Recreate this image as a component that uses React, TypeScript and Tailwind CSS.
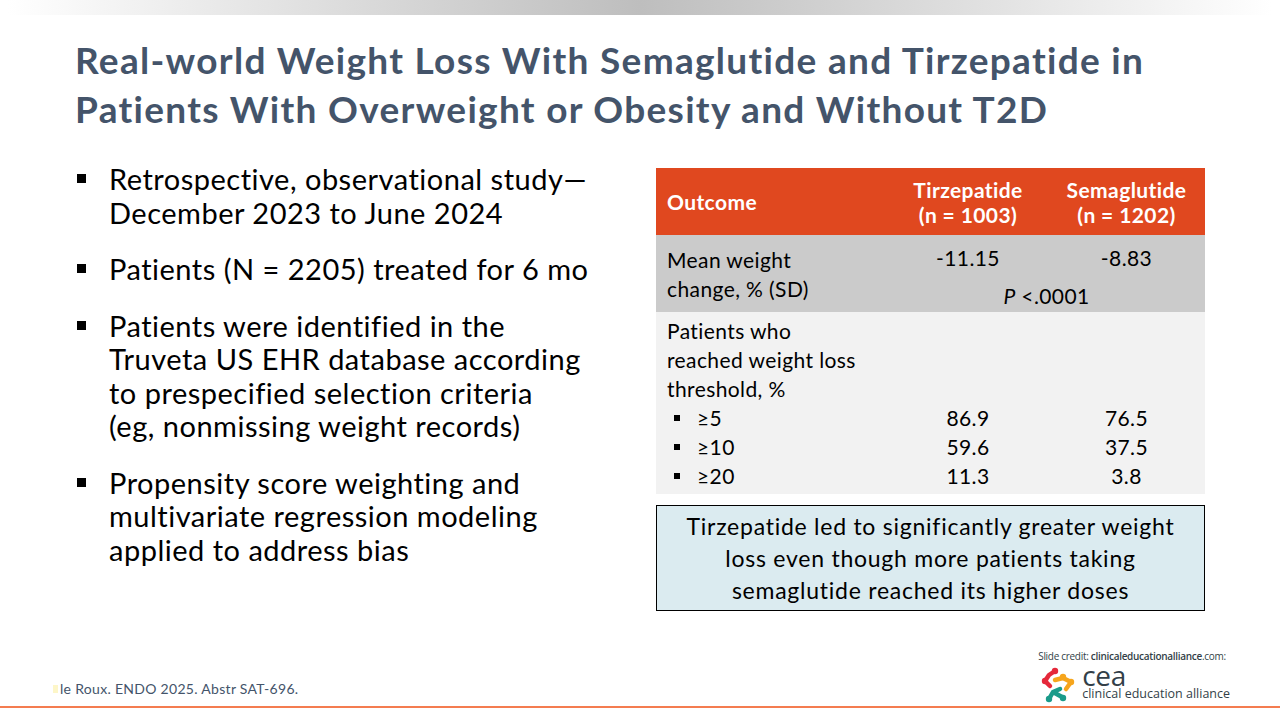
import React from 'react';

const body = "font-['Lato','Liberation_Sans',sans-serif]";

const bullets = [
  ['Retrospective, observational study—', 'December 2023 to June 2024'],
  ['Patients (N = 2205) treated for 6 mo'],
  [
    'Patients were identified in the',
    'Truveta US EHR database according',
    'to prespecified selection criteria',
    '(eg, nonmissing weight records)',
  ],
  ['Propensity score weighting and', 'multivariate regression modeling', 'applied to address bias'],
];

const thresholds = [
  ['≥5', '86.9', '76.5'],
  ['≥10', '59.6', '37.5'],
  ['≥20', '11.3', '3.8'],
];

const CeaMark = () => (
  <svg width="34" height="36" viewBox="0 0 34 36">
    {/* red arm */}
    <path d="M14 4 L8 8 L4 14 L9 19" stroke="#e5283a" strokeWidth="4.5" fill="none" strokeLinecap="round" strokeLinejoin="round" />
    <circle cx="14" cy="4" r="3.2" fill="#e5283a" />
    <circle cx="4" cy="14" r="3.2" fill="#e5283a" />
    {/* orange arm */}
    <path d="M14 13 L22 11 L30 15 L25 22" stroke="#f6a51c" strokeWidth="4.5" fill="none" strokeLinecap="round" strokeLinejoin="round" />
    <circle cx="22" cy="10" r="3.2" fill="#f6a51c" />
    <circle cx="30" cy="15" r="3.2" fill="#f6a51c" />
    {/* teal arm */}
    <path d="M19 22 L12 25 L8 32 M12 25 L21 30" stroke="#1a9b8a" strokeWidth="4.5" fill="none" strokeLinecap="round" strokeLinejoin="round" />
    <circle cx="8" cy="32" r="3.2" fill="#1a9b8a" />
    <circle cx="22" cy="31" r="3.2" fill="#1a9b8a" />
  </svg>
);

export default function App() {
  return (
    <div className={`w-[1280px] h-[720px] bg-white flex flex-col overflow-hidden ${body}`}>
      {/* top gradient strip */}
      <div className="h-[15px] mx-[8px] bg-gradient-to-r from-white via-[#bebebe] to-white" />

      {/* title */}
      <h1 className="px-[75px] pt-[20px] text-[37px] leading-[49px] font-bold text-[#44546a] tracking-[1.3px]">
        Real-world Weight Loss With Semaglutide and Tirzepatide in
        <br />
        Patients With Overweight or Obesity and Without T2D
      </h1>

      <div className="flex pt-[29px] flex-1">
        {/* left bullets */}
        <div className="w-[600px] pl-[77px] flex flex-col gap-[23px]">
          {bullets.map((lines, i) => (
            <div key={i} className="flex text-[29px] leading-[33.5px] tracking-[0.5px] text-black">
              <div className="w-[32px] pt-[12px]">
                <div className="w-[9px] h-[9px] bg-black" />
              </div>
              <div>
                {lines.map((l) => (
                  <div key={l}>{l}</div>
                ))}
              </div>
            </div>
          ))}
        </div>

        {/* right table */}
        <div className="pl-[56px] pt-[6px] flex flex-col">
          <div className="w-[549px] text-[21px] tracking-[0.4px]">
            <div className="grid grid-cols-[232px_160px_157px] bg-[#e0481f] text-white font-bold h-[67px] items-center leading-[25px]">
              <div className="pl-[11px]">Outcome</div>
              <div className="text-center">Tirzepatide<br />(n = 1003)</div>
              <div className="text-center">Semaglutide<br />(n = 1202)</div>
            </div>
            <div className="grid grid-cols-[232px_160px_157px] bg-[#cbcbcb] h-[77px] pt-[8px] leading-[29px] text-black">
              <div className="pl-[11px] pt-[2px]">Mean weight<br />change, % (SD)</div>
              <div className="col-span-2 flex flex-col">
                <div className="grid grid-cols-[160px_157px]">
                  <div className="text-center">-11.15</div>
                  <div className="text-center">-8.83</div>
                </div>
                <div className="text-center pt-[9px]"><i>P</i> &lt;.0001</div>
              </div>
            </div>
            <div className="bg-[#f2f2f2] h-[182px] pt-[4px] leading-[29px] text-black">
              <div className="pl-[11px]">Patients who<br />reached weight loss<br />threshold, %</div>
              {thresholds.map(([t, a, b]) => (
                <div key={t} className="grid grid-cols-[232px_160px_157px]">
                  <div className="pl-[18px] flex items-center">
                    <div className="w-[6px] h-[6px] bg-black mr-[17px]" />
                    <span>{t}</span>
                  </div>
                  <div className="text-center">{a}</div>
                  <div className="text-center">{b}</div>
                </div>
              ))}
            </div>
          </div>

          <div className="mt-[11px] w-[549px] h-[106px] bg-[#dbebf0] border border-black flex items-center justify-center text-center text-[23px] leading-[32px] tracking-[0.75px] text-black">
            <div>
              Tirzepatide led to significantly greater weight<br />
              loss even though more patients taking<br />
              semaglutide reached its higher doses
            </div>
          </div>
        </div>
      </div>

      {/* footer */}
      <div className="h-[78px] flex items-end justify-between pl-[53px] pr-[50px] pb-[3px]">
        <div className="flex items-center gap-[2px] pb-[4px] text-[14px] tracking-[0.3px] text-[#44546a]">
          <span className="w-[5px] h-[8px] bg-[#fdf6c8]" />
          <span>le Roux. ENDO 2025. Abstr SAT-696.</span>
        </div>
        <div className="flex flex-col font-['Open_Sans','Liberation_Sans',sans-serif] text-[#333f48]">
          <div className="text-[10px] leading-[13px] tracking-[-0.3px]">
            Slide credit: <span className="font-semibold">clinicaleducationalliance</span>.com:
          </div>
          <div className="flex items-start gap-[7px] pl-[3px] pt-[2px]">
            <div className="pt-[2px]">
              <CeaMark />
            </div>
            <div className="flex flex-col">
              <span className="text-[28px] leading-[20px] tracking-[-0.3px]">cea</span>
              <span className="text-[12.5px] leading-[14px] pt-[2px]">clinical education alliance</span>
            </div>
          </div>
        </div>
      </div>
      <div className="h-[2px] bg-[#f47c50] mb-[12px]" />
    </div>
  );
}
